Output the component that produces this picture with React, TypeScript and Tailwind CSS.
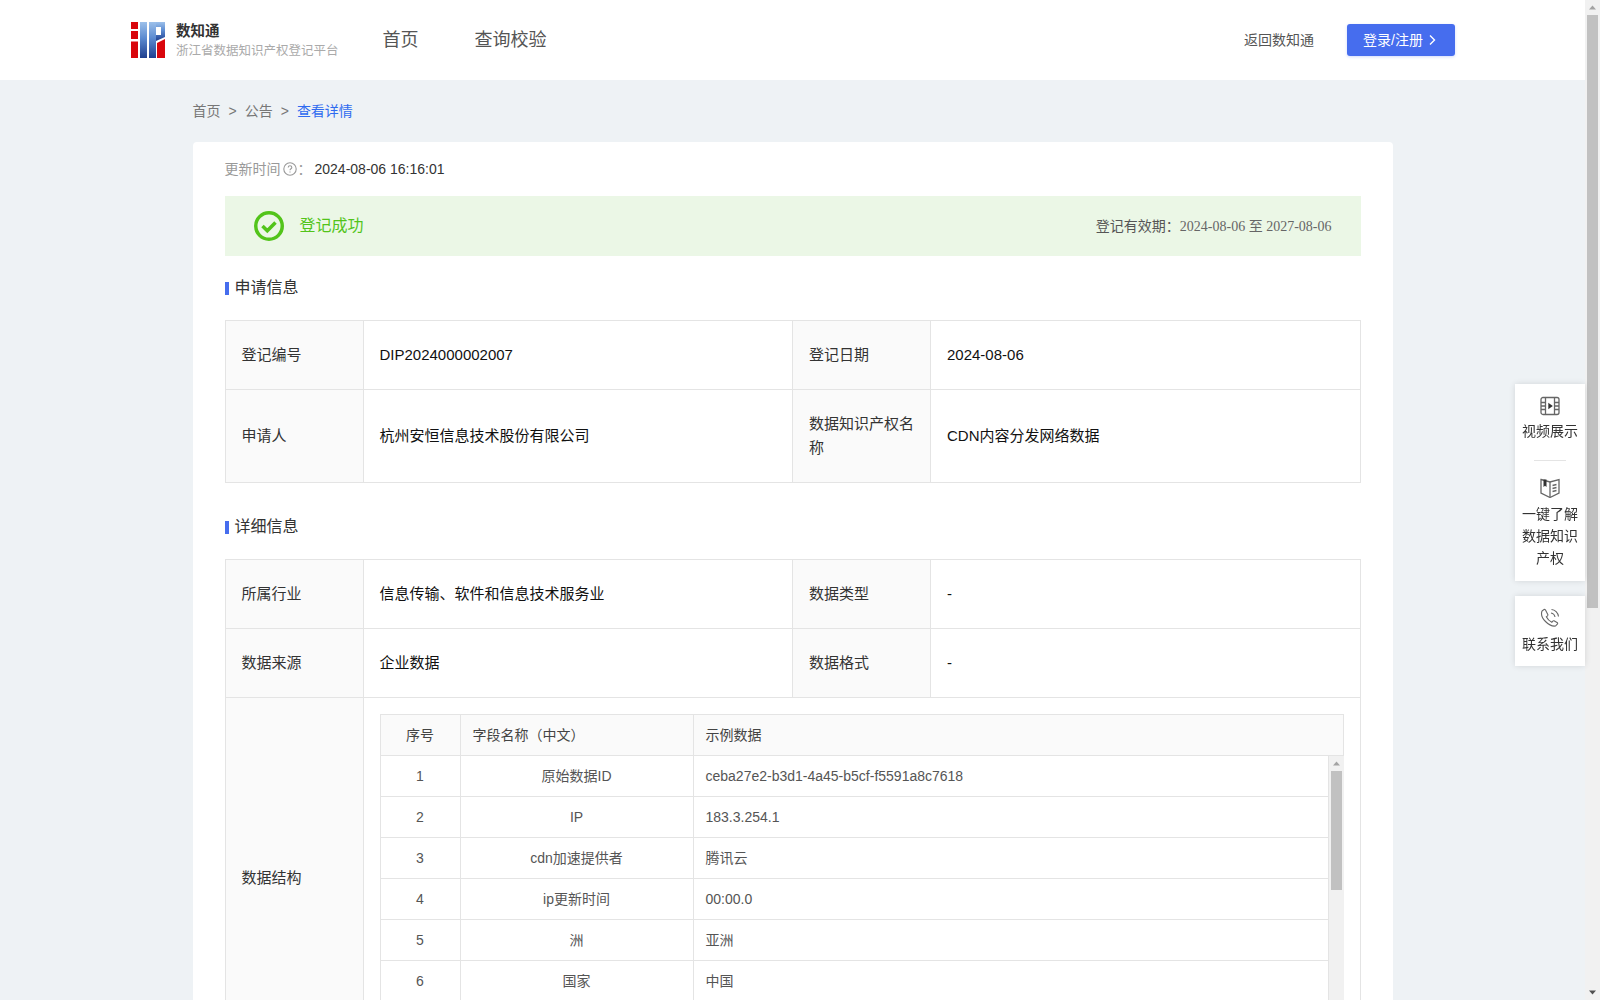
const FONT = "font-['Liberation_Sans','Noto_Sans_CJK_SC',sans-serif]";

function Logo() {
  return (
    <svg width="34" height="36" viewBox="0 0 34 36" className="shrink-0">
      <defs>
        <linearGradient id="blue" x1="0" y1="0" x2="0" y2="1">
          <stop offset="0" stopColor="#9cc0ea" />
          <stop offset="0.45" stopColor="#5b8ad0" />
          <stop offset="1" stopColor="#1f3f8f" />
        </linearGradient>
      </defs>
      <rect x="0" y="0" width="7" height="7" fill="#d9060c" />
      <rect x="0" y="9" width="7" height="8" fill="#d9060c" />
      <rect x="0" y="19.500" width="7" height="16.500" fill="#d9060c" />
      <rect x="9" y="0" width="7" height="36" fill="url(#blue)" />
      <rect x="18" y="0" width="7" height="36" fill="url(#blue)" />
      <path d="M25 0h9v15l-9 4v-6h5V5h-5z" fill="url(#blue)" />
      <path d="M26 21l8-4v19h-8z" fill="#d9060c" />
    </svg>
  );
}

function SectionTitle(props: { text: string }) {
  return (
    <div className="flex items-center h-[20px] text-[16px] text-[#333]">
      <span className="w-[4px] h-[13px] bg-[#466dee] mr-[6px]" />
      {props.text}
    </div>
  );
}

function Label(props: { children: React.ReactNode }) {
  return (
    <td className="w-[138px] bg-[#fafafa] border border-[#e4e4e4] px-[16px] py-[22px] text-[15px] leading-[24px] text-[#333]">
      {props.children}
    </td>
  );
}

function Value(props: { children: React.ReactNode }) {
  return (
    <td className="border border-[#e4e4e4] px-[16px] py-[22px] text-[15px] leading-[24px] text-[#111]">
      {props.children}
    </td>
  );
}

function Scrollbar(props: { thumbTop: string; thumbHeight: string; topArrow: string }) {
  return (
    <div className="relative w-[15px] h-full shrink-0 bg-[#f1f1f1]">
      <div
        className="absolute left-[2px] w-[11px] bg-[#c1c1c1]"
        style={{ top: props.thumbTop, height: props.thumbHeight }}
      />
      <svg width="15" height="15" viewBox="0 0 15 15" className="absolute left-0 top-0">
        <path d="M4 9.500 7.500 5.500 11 9.500z" fill={props.topArrow} />
      </svg>
    </div>
  );
}

const fields = [
  ["1", "原始数据ID", "ceba27e2-b3d1-4a45-b5cf-f5591a8c7618"],
  ["2", "IP", "183.3.254.1"],
  ["3", "cdn加速提供者", "腾讯云"],
  ["4", "ip更新时间", "00:00.0"],
  ["5", "洲", "亚洲"],
  ["6", "国家", "中国"],
];

function FieldTable() {
  return (
    <div>
      <div className="grid grid-cols-[79px_233px_1fr] h-[42px] bg-[#fafafa] border border-[#e4e4e4] text-[14px] text-[#444] items-center">
        <div className="text-center">序号</div>
        <div className="h-full flex items-center px-[12px] border-l border-[#e4e4e4]">字段名称（中文）</div>
        <div className="h-full flex items-center px-[12px] border-l border-[#e4e4e4]">示例数据</div>
      </div>
      <div className="flex h-[285px] border-l border-[#e4e4e4]">
        <div className="flex-1 overflow-hidden border-r border-[#e4e4e4]">
          {fields.map((row) => (
            <div key={row[0]} className="grid grid-cols-[79px_233px_1fr] h-[41px] border-b border-[#e4e4e4] text-[14px] text-[#555] items-center">
              <div className="text-center">{row[0]}</div>
              <div className="h-full flex items-center justify-center border-l border-[#e4e4e4]">{row[1]}</div>
              <div className="h-full flex items-center px-[12px] border-l border-[#e4e4e4]">{row[2]}</div>
            </div>
          ))}
        </div>
        <Scrollbar thumbTop="15px" thumbHeight="119px" topArrow="#a3a3a3" />
      </div>
    </div>
  );
}

function SideItem(props: { icon: React.ReactNode; lines: string[]; gap: string }) {
  return (
    <div className="flex flex-col items-center">
      {props.icon}
      <div className={`${props.gap} text-[14px] leading-[22px] text-[#333] text-center`}>
        {props.lines.map((l) => (
          <div key={l}>{l}</div>
        ))}
      </div>
    </div>
  );
}

export default function App() {
  return (
    <div className={`flex h-[1000px] overflow-hidden bg-[#eef2f5] ${FONT}`}>
      <div className="flex-1 min-w-0">
        <header className="h-[80px] bg-white flex items-center pl-[131px] pr-[130px]">
          <Logo />
          <div className="ml-[11px] w-[206.500px]">
            <div className="text-[14.500px] leading-[20px] font-bold text-[#333]">数知通</div>
            <div className="text-[12.500px] leading-[18px] text-[#aaa] mt-[1px]">浙江省数据知识产权登记平台</div>
          </div>
          <nav className="flex gap-[56px] text-[18px] text-[#555]">
            <span>首页</span>
            <span>查询校验</span>
          </nav>
          <div className="ml-auto text-[14px] text-[#555]">返回数知通</div>
          <button
            type="button"
            className="ml-[33px] w-[108px] h-[32px] pr-[3px] rounded-[3px] bg-[#466dee] text-white text-[14px] flex items-center justify-center gap-[5px] shadow-[0_1px_3px_rgba(70,109,238,0.25)]"
          >
            登录/注册
            <svg width="8" height="12" viewBox="0 0 8 12" fill="none" stroke="currentColor" strokeWidth="1.400">
              <path d="M2 1.500 6.500 6 2 10.500" />
            </svg>
          </button>
        </header>

        <main className="w-[1200px] mx-auto">
          <div className="h-[62px] flex items-center text-[14px] text-[#777]">
            <span>首页</span>
            <span className="mx-[8px]">&gt;</span>
            <span>公告</span>
            <span className="mx-[8px]">&gt;</span>
            <span className="text-[#2f6bf0]">查看详情</span>
          </div>

          <div className="bg-white rounded-[4px] px-[32px] pt-[16px] pb-[32px]">
            <div className="h-[22px] flex items-center text-[14px]">
              <span className="text-[#999]">更新时间</span>
              <svg width="14" height="14" viewBox="0 0 14 14" fill="none" stroke="#999" strokeWidth="1.100" className="ml-[2px]">
                <circle cx="7" cy="7" r="6.200" />
                <path d="M5.200 5.500c0-2.400 3.600-2.400 3.600 0 0 1.300-1.800 1.300-1.800 2.800" />
                <path d="M7 9.400v1.200" />
              </svg>
              <span className="text-[#999] ml-[1px] mr-[3px]">：</span>
              <span className="text-[#333]">2024-08-06 16:16:01</span>
            </div>

            <div className="mt-[16px] h-[60px] bg-[#ebf7e6] flex items-center px-[29px]">
              <svg width="30" height="30" viewBox="0 0 30 30" fill="none" stroke="#52c41a">
                <circle cx="15" cy="15" r="13.250" strokeWidth="3.500" />
                <path d="M8.500 15l4.800 4.800 8.200-8.300" strokeWidth="3.500" />
              </svg>
              <span className="ml-[16px] text-[16px] text-[#52c41a]">登记成功</span>
              <span className="ml-auto text-[14px] text-[#555]">
                登记有效期：<span className="text-[#666] font-['Liberation_Serif','Noto_Sans_CJK_SC',serif]">2024-08-06 至 2027-08-06</span>
              </span>
            </div>

            <div className="mt-[22px]">
              <SectionTitle text="申请信息" />
            </div>
            <table className="w-full mt-[22px] border-collapse table-fixed">
              <tbody>
                <tr>
                  <Label>登记编号</Label>
                  <Value>DIP2024000002007</Value>
                  <Label>登记日期</Label>
                  <Value>2024-08-06</Value>
                </tr>
                <tr>
                  <Label>申请人</Label>
                  <Value>杭州安恒信息技术股份有限公司</Value>
                  <Label>数据知识产权名称</Label>
                  <Value>CDN内容分发网络数据</Value>
                </tr>
              </tbody>
            </table>

            <div className="mt-[34px]">
              <SectionTitle text="详细信息" />
            </div>
            <table className="w-full mt-[22px] border-collapse table-fixed">
              <tbody>
                <tr>
                  <Label>所属行业</Label>
                  <Value>信息传输、软件和信息技术服务业</Value>
                  <Label>数据类型</Label>
                  <Value>-</Value>
                </tr>
                <tr>
                  <Label>数据来源</Label>
                  <Value>企业数据</Value>
                  <Label>数据格式</Label>
                  <Value>-</Value>
                </tr>
                <tr>
                  <Label>数据结构</Label>
                  <td colSpan={3} className="border border-[#e4e4e4] p-[16px]">
                    <FieldTable />
                  </td>
                </tr>
              </tbody>
            </table>
          </div>
        </main>
      </div>

      <div className="relative h-full">
        <Scrollbar thumbTop="15px" thumbHeight="593px" topArrow="#a3a3a3" />
        <svg width="15" height="15" viewBox="0 0 15 15" className="absolute left-0 bottom-0">
          <path d="M4 5.500h7L7.500 9.500z" fill="#505050" />
        </svg>
      </div>

      <aside className="fixed right-[15px] top-[384px] w-[70px] flex flex-col gap-[15px]">
        <div className="bg-white shadow-[0_0_6px_rgba(0,0,0,0.12)] pt-[12px] pb-[12px]">
          <SideItem
            gap="mt-[4px]"
            lines={["视频展示"]}
            icon={
              <svg width="20" height="20" viewBox="0 0 20 20" fill="none" stroke="#666" strokeWidth="1.300">
                <rect x="1" y="1.500" width="18" height="17" rx="2" />
                <path d="M5.500 1.500v17M14.500 1.500v17M1 6.500h4.500M1 10h4.500M1 13.500h4.500M14.500 6.500h4.500M14.500 10h4.500M14.500 13.500h4.500" />
                <path d="M8.300 6.800v6.400l4.500-3.200z" fill="#333" stroke="none" />
              </svg>
            }
          />
          <div className="w-[32px] h-px bg-[#e4e4e4] mx-auto mt-[18px] mb-[17px]" />
          <SideItem
            gap="mt-[5px]"
            lines={["一键了解", "数据知识", "产权"]}
            icon={
              <svg width="20" height="20" viewBox="0 0 20 20" fill="none" stroke="#666" strokeWidth="1.300">
                <path d="M1 1.500 10 4l9-2.500V15l-9 4.500L1 15z" />
                <path d="M10 4v15" />
                <path d="M3.500 1.500h3v7.500l-1.500-1.200L3.500 9z" fill="#333" stroke="none" />
                <path d="M12.500 7.500l4-1M12.500 10.500l4-1M12.500 13.500l4-1" />
              </svg>
            }
          />
        </div>
        <div className="bg-white shadow-[0_0_6px_rgba(0,0,0,0.12)] pt-[12px] pb-[11px]">
          <SideItem
            gap="mt-[5px]"
            lines={["联系我们"]}
            icon={
              <svg width="20" height="20" viewBox="0 0 20 20" fill="none" stroke="#666" strokeWidth="1.100">
                <path d="M4 1.500 2 3c-1.300 3.500.5 7.500 3.500 10.500s7 5 10 4.500l2-2.200c.3-.5 0-1-.5-1.300l-3-1.700c-.4-.2-.9 0-1.200.3l-1 1.200c-2-1-4.500-3.500-5.500-5.500l1.200-1c.3-.3.500-.8.3-1.200L5.500 2C5.200 1.500 4.500 1.100 4 1.500z" />
                <path d="M11 5c2 .3 3.600 1.800 4 4M11.500 1.500c3.500.3 6.500 3.300 7 7" />
              </svg>
            }
          />
        </div>
      </aside>
    </div>
  );
}
